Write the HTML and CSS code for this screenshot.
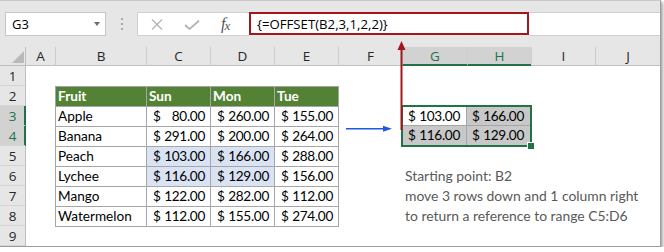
FILE: index.html
```html
<!DOCTYPE html>
<html>
<head>
    <title>OFFSET</title>
    <meta charset="UTF-8">
    <meta name="viewport" content="width=device-width, initial-scale=1.0">
    <link rel="stylesheet" href="styles.css">
</head>
<body>
<div class="window">
    <div class="toolbar">
        <div class="namebox"><span>G3</span><span class="caret"></span></div>
        <div class="grip"><i></i><i></i><i></i></div>
        <div class="fxbuttons">
            <svg class="btnX" width="12" height="11" viewBox="0 0 12 11"><path d="M1 0.5 L11 10.5 M11 0.5 L1 10.5" stroke="#b4b4b4" stroke-width="1.3" fill="none"/></svg>
            <svg class="btnOk" width="16" height="10" viewBox="0 0 16 10"><path d="M1 5 L5.5 9 L15 0.7" stroke="#b4b4b4" stroke-width="1.8" fill="none"/></svg>
            <span class="fx">f<span class="fxSub">x</span></span>
        </div>
        <div class="formula">{=OFFSET(B2,3,1,2,2)}</div>
        <div class="formulaRest"></div>
    </div>

    <div class="sheet">
        <div class="corner"><span class="cornerTri"></span></div>
        <div class="colhead">A</div>
        <div class="colhead">B</div>
        <div class="colhead">C</div>
        <div class="colhead">D</div>
        <div class="colhead">E</div>
        <div class="colhead">F</div>
        <div class="colhead sel">G</div>
        <div class="colhead sel">H</div>
        <div class="colhead">I</div>
        <div class="colhead">J</div>

        <div class="rownums">
            <div class="rownum">1</div>
            <div class="rownum">2</div>
            <div class="rownum sel">3</div>
            <div class="rownum sel">4</div>
            <div class="rownum">5</div>
            <div class="rownum">6</div>
            <div class="rownum">7</div>
            <div class="rownum">8</div>
            <div class="rownum">9</div>
        </div>

        <!-- tabela B2:E8 -->
        <div class="fruits">
            <div class="cell head">Fruit</div>
            <div class="cell head">Sun</div>
            <div class="cell head">Mon</div>
            <div class="cell head">Tue</div>

            <div class="cell name">Apple</div>
            <div class="cell money"><span>$</span><span>80.00</span></div>
            <div class="cell money"><span>$</span><span>260.00</span></div>
            <div class="cell money"><span>$</span><span>155.00</span></div>

            <div class="cell name">Banana</div>
            <div class="cell money"><span>$</span><span>291.00</span></div>
            <div class="cell money"><span>$</span><span>200.00</span></div>
            <div class="cell money"><span>$</span><span>264.00</span></div>

            <div class="cell name">Peach</div>
            <div class="cell money blue"><span>$</span><span>103.00</span></div>
            <div class="cell money blue"><span>$</span><span>166.00</span></div>
            <div class="cell money"><span>$</span><span>288.00</span></div>

            <div class="cell name">Lychee</div>
            <div class="cell money blue"><span>$</span><span>116.00</span></div>
            <div class="cell money blue"><span>$</span><span>129.00</span></div>
            <div class="cell money"><span>$</span><span>156.00</span></div>

            <div class="cell name">Mango</div>
            <div class="cell money"><span>$</span><span>122.00</span></div>
            <div class="cell money"><span>$</span><span>282.00</span></div>
            <div class="cell money"><span>$</span><span>112.00</span></div>

            <div class="cell name">Watermelon</div>
            <div class="cell money"><span>$</span><span>112.00</span></div>
            <div class="cell money"><span>$</span><span>155.00</span></div>
            <div class="cell money"><span>$</span><span>274.00</span></div>
        </div>

        <!-- resultado G3:H4 -->
        <div class="selection">
            <div class="scell active"><span>$</span><span>103.00</span></div>
            <div class="scell"><span>$</span><span>166.00</span></div>
            <div class="scell"><span>$</span><span>116.00</span></div>
            <div class="scell"><span>$</span><span>129.00</span></div>
            <span class="handle"></span>
        </div>

        <div class="notes">
            <div>Starting point: B2</div>
            <div>move 3 rows down and 1 column right</div>
            <div>to return a reference to range C5:D6</div>
        </div>
    </div>

    <svg class="arrows" width="660" height="247" viewBox="0 0 660 247">
        <line x1="401.5" y1="47" x2="401.5" y2="129" stroke="#a3171c" stroke-width="2"/>
        <polygon points="401.5,40 397.5,49 405.5,49" fill="#a3171c"/>
        <line x1="346" y1="127.7" x2="386" y2="127.7" stroke="#2158e0" stroke-width="1.5"/>
        <polygon points="392,127.7 383,124.7 383,130.7" fill="#2158e0"/>
    </svg>
</div>
</body>
</html>
```

FILE: styles.css
```css
body {
    margin: 0;
    background: #fff;
}

.window {
    position: relative;
    width: 660px;
    background: #fff;
    border-top: 1px solid #c8c8c8;
    border-right: 1px solid #9c9c9c;
    border-bottom: 1px solid #9c9c9c;
    box-shadow: 2px 2px 3px rgba(0, 0, 0, 0.35);
    font-family: "Open Sans", sans-serif;
}

/* barra de formulas
=====================*/
.toolbar {
    display: flex;
    height: 24px;
    padding: 11px 0;
    background: #e6e6e6;
}

.namebox {
    box-sizing: border-box;
    width: 101px;
    margin-left: 5px;
    padding: 0 5px 0 6px;
    display: flex;
    align-items: center;
    justify-content: space-between;
    background: #fff;
    border: 1px solid #c6c6c6;
    font-size: 13px;
    color: #000;
}

.caret {
    width: 0;
    height: 0;
    border-left: 3.5px solid transparent;
    border-right: 3.5px solid transparent;
    border-top: 4px solid #6e6e6e;
}

.grip {
    width: 31px;
    display: flex;
    flex-direction: column;
    align-items: center;
    justify-content: center;
    gap: 3px;
}

.grip i {
    width: 2px;
    height: 2px;
    background: #a6a6a6;
}

.fxbuttons {
    box-sizing: border-box;
    width: 112px;
    padding-left: 13px;
    display: flex;
    align-items: center;
    gap: 21px;
    background: #fff;
    border: 1px solid #d0d0d0;
    border-right: none;
}

.btnOk {
    margin-top: 1px;
}

.fx {
    font-family: "Liberation Serif", serif;
    font-style: italic;
    font-size: 16px;
    color: #555;
    letter-spacing: -1px;
}

.fxSub {
    font-size: 13px;
    position: relative;
    top: 1px;
}

.formula {
    box-sizing: border-box;
    width: 280px;
    height: 23px;
    padding-left: 6px;
    display: flex;
    align-items: center;
    background: #fff;
    border: 2px solid #a3171c;
    font-size: 13.2px;
    color: #000;
}

.formulaRest {
    flex: 1;
    background: #fff;
    border-top: 1px solid #d0d0d0;
    border-bottom: 1px solid #d0d0d0;
}

/* folha
=====================*/
.sheet {
    display: grid;
    grid-template-columns: 26px 29px 91px 64px 64px 64px 64px 65px 64px 64px 65px;
    grid-template-rows: 19px repeat(9, 20px);
    background: #fff;
}

.corner {
    box-sizing: border-box;
    display: flex;
    align-items: flex-end;
    justify-content: flex-end;
    padding: 0 1px 2px 0;
    background: #e6e6e6;
    border-right: 1px solid #bfbfbf;
    border-bottom: 1px solid #bfbfbf;
}

.cornerTri {
    width: 0;
    height: 0;
    border-left: 12px solid transparent;
    border-bottom: 12px solid #b9b9b9;
}

.colhead {
    box-sizing: border-box;
    display: flex;
    align-items: center;
    justify-content: center;
    background: #e6e6e6;
    border-left: 1px solid #cdcdcd;
    border-bottom: 1px solid #bfbfbf;
    font-size: 13.5px;
    color: #262626;
}

.corner + .colhead {
    border-left: none;
}

.colhead.sel {
    background: #d2d2d2;
    color: #217346;
    border-bottom: 2px solid #217346;
}

.rownums {
    grid-column: 1;
    grid-row: 2 / 11;
    display: flex;
    flex-direction: column;
    background: #e6e6e6;
    border-right: 1px solid #bfbfbf;
}

.rownum {
    box-sizing: border-box;
    height: 20px;
    display: flex;
    align-items: center;
    justify-content: center;
    border-bottom: 1px solid #d4d4d4;
    font-size: 13.5px;
    color: #262626;
}

.rownum.sel {
    background: #d2d2d2;
    color: #217346;
    box-shadow: 1px 0 0 #217346, inset -1px 0 0 #217346;
}

/* tabela de frutas */
.fruits {
    grid-column: 3 / 7;
    grid-row: 3 / 10;
    justify-self: start;
    align-self: start;
    display: grid;
    grid-template-columns: 91px 64px 64px 64px;
    grid-auto-rows: 20px;
    border-right: 1px solid #a6a6a6;
    border-bottom: 1px solid #a6a6a6;
    font-family: "Lato", sans-serif;
    font-size: 13.6px;
    line-height: 19px;
    color: #000;
}

.cell {
    box-sizing: border-box;
    border-left: 1px solid #a6a6a6;
    border-top: 1px solid #a6a6a6;
    background: #fff;
}

.cell.head {
    background: #548235;
    color: #fff;
    font-weight: bold;
    padding-left: 2px;
}

.cell.name {
    padding-left: 2px;
}

.money {
    display: flex;
    justify-content: space-between;
    padding: 0 5px 0 6px;
    letter-spacing: -0.3px;
}

.cell.blue {
    background: #dae3f3;
}

/* selecao G3:H4 */
.selection {
    grid-column: 8 / 10;
    grid-row: 4 / 6;
    position: relative;
    margin: -1px -1px -1px -1px;
    display: grid;
    grid-template-columns: 63px 63px;
    grid-template-rows: 18px 19px;
    gap: 1px;
    background: #a6a6a6;
    border: 2px solid #217346;
    font-family: "Lato", sans-serif;
    font-size: 13.6px;
    line-height: 18px;
    color: #000;
}

.scell {
    display: flex;
    justify-content: space-between;
    padding: 0 6px 0 5px;
    letter-spacing: -0.3px;
    background: #c8c8c8;
}

.scell.active {
    background: #fff;
}

.handle {
    position: absolute;
    right: -4px;
    bottom: -4px;
    width: 6px;
    height: 6px;
    background: #217346;
    box-shadow: -1px -1px 0 #fff;
}

.notes {
    grid-column: 8 / 12;
    grid-row: 7 / 10;
    padding-left: 3px;
    font-family: "Lato", sans-serif;
    font-size: 13.9px;
    line-height: 20px;
    color: #595959;
}

.arrows {
    position: absolute;
    left: 0;
    top: 0;
    pointer-events: none;
}
```
